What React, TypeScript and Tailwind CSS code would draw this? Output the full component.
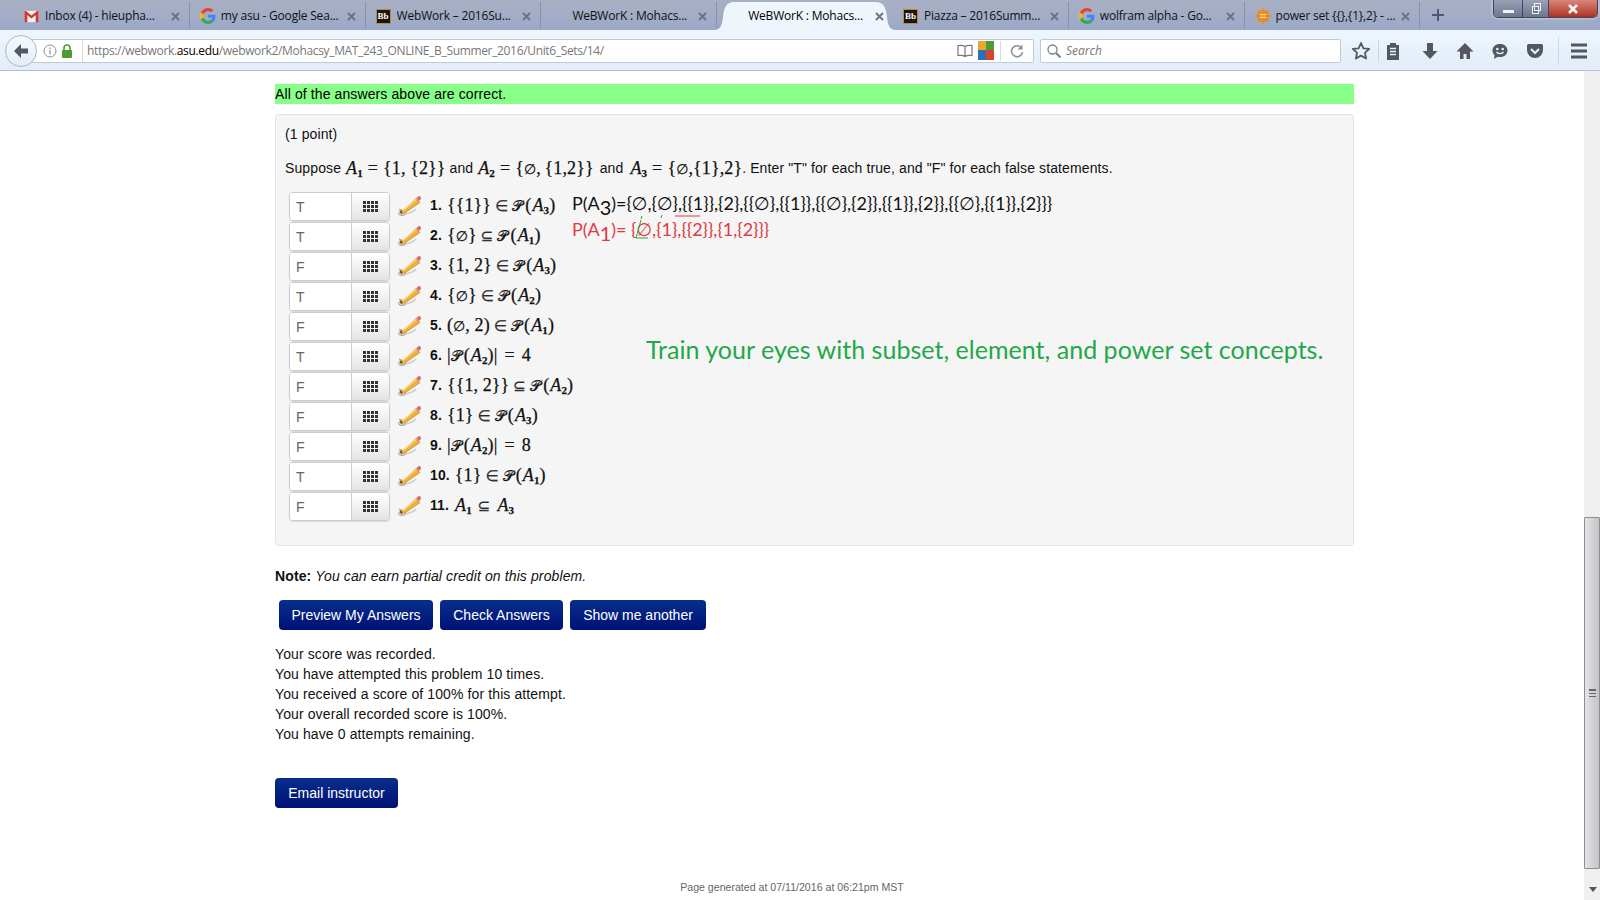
import React from 'react';

const GoogleG = () => (
  <svg width="16" height="16" viewBox="0 0 48 48">
    <path fill="#EA4335" d="M24 9.5c3.5 0 6.700 1.200 9.200 3.600l6.900-6.900C35.900 2.400 30.500 0 24 0 14.600 0 6.500 5.400 2.600 13.200l8 6.200C12.500 13.600 17.800 9.500 24 9.500z" />
    <path fill="#4285F4" d="M46.500 24.500c0-1.600-.1-3.100-.4-4.500H24v9h12.700c-.6 3-2.200 5.500-4.700 7.200l7.700 6c4.500-4.200 6.800-10.300 6.800-17.700z" />
    <path fill="#FBBC05" d="M10.600 28.600c-.5-1.500-.8-3-.8-4.600s.3-3.100.8-4.600l-8-6.200C.9 16.500 0 20.100 0 24s.9 7.500 2.600 10.800l8-6.200z" />
    <path fill="#34A853" d="M24 48c6.500 0 11.900-2.100 15.900-5.800l-7.700-6c-2.200 1.500-4.900 2.300-8.200 2.300-6.200 0-11.500-4.100-13.400-9.900l-8 6.200C6.500 42.600 14.600 48 24 48z" />
  </svg>
);

const Gmail = () => (
  <svg width="15" height="15" viewBox="0 0 16 16">
    <rect x="0.500" y="2" width="15" height="12" fill="#f4f0ee" />
    <path d="M0.500 2v12h3V6.500L8 10l4.500-3.500V14h3V2h-1.500L8 6.800 2 2z" fill="#d0392e" />
  </svg>
);

const Blackboard = () => (
  <span className="flex h-[15px] w-[15px] items-center justify-center border border-[#b98a3a] bg-[#1c1610] font-['Liberation_Serif',serif] text-[9px] leading-none font-bold text-white">
    Bb
  </span>
);

const OrangeGear = () => (
  <svg width="16" height="16" viewBox="0 0 16 16">
    <g fill="#ee8a1d">
      <circle cx="8" cy="8" r="5.500" />
      <rect x="6.800" y="0.500" width="2.400" height="15" />
      <rect x="0.500" y="6.800" width="15" height="2.400" />
      <rect x="6.800" y="0.500" width="2.400" height="15" transform="rotate(45 8 8)" />
      <rect x="6.800" y="0.500" width="2.400" height="15" transform="rotate(-45 8 8)" />
    </g>
    <rect x="5" y="6" width="6" height="1.200" fill="#fde3b8" />
    <rect x="5" y="8.800" width="6" height="1.200" fill="#fde3b8" />
  </svg>
);

const CloseX = () => (
  <svg width="9" height="9" viewBox="0 0 9 9" className="relative shrink-0">
    <path d="M1 1l7 7M8 1L1 8" stroke="#6b7280" strokeWidth="1.800" />
  </svg>
);

const tabs: { title: string; icon: React.ReactNode; active?: boolean }[] = [
  { title: 'Inbox (4) - hieupha...', icon: <Gmail /> },
  { title: 'my asu - Google Sea...', icon: <GoogleG /> },
  { title: 'WebWork – 2016Su...', icon: <Blackboard /> },
  { title: 'WeBWorK : Mohacs...', icon: null },
  { title: 'WeBWorK : Mohacs...', icon: null, active: true },
  { title: 'Piazza – 2016Summ...', icon: <Blackboard /> },
  { title: 'wolfram alpha - Go...', icon: <GoogleG /> },
  { title: 'power set {{},{1},2} - ...', icon: <OrangeGear /> },
];

const TabStrip = () => (
  <div className="flex h-[30px] bg-gradient-to-b from-[#a9b0c4] to-[#9ba9c7] pl-[14px]">
    {tabs.map((t, i) => (
      <div
        key={i}
        className={
          t.active
            ? 'relative mt-[2px] flex h-[28px] w-[175.800px] items-center pr-[9px] pl-[10px] text-black'
            : 'my-[2px] flex h-[26px] w-[175.800px] items-center border-r border-[#8792ab] pt-[2px] pr-[9px] pl-[10px] text-[#111]'
        }
      >
        {t.active && (
          <svg width="182" height="28" viewBox="0 0 182 28" className="absolute top-0 left-[-3px]">
            <path d="M0 28C6 28 8 24 9 15C10 5 13 0 20 0H162C169 0 172 5 173 15C174 24 176 28 182 28Z" fill="#eef5fc" />
          </svg>
        )}
        <span className="flex w-[21px] shrink-0 items-center">{t.icon}</span>
        <span className="relative min-w-0 flex-1 truncate font-['Open_Sans',sans-serif] text-[12px] tracking-[-0.2px]">{t.title}</span>
        <CloseX />
      </div>
    ))}
    <svg width="14" height="14" viewBox="0 0 14 14" className="mt-[8px] ml-[11px]">
      <path d="M7 1v12M1 7h12" stroke="#4d5a73" strokeWidth="2" />
    </svg>
    <div className="ml-[48px] flex h-[18px] w-[105px] overflow-hidden rounded-b-[5px] border border-t-0 border-[#3f4557] shadow-[0_0_3px_#e8ecf4]">
      <div className="flex w-[28px] items-end justify-center bg-gradient-to-b from-[#9aa2b8] to-[#6d7690] pb-[4px]">
        <span className="h-[3px] w-[11px] bg-[#f2f2f2]" />
      </div>
      <div className="flex w-[27px] items-center justify-center border-x border-[#3f4557] bg-gradient-to-b from-[#9aa2b8] to-[#6d7690]">
        <span className="relative mt-[2px] h-[8px] w-[7px] border border-[#f2f2f2] bg-[#6d7690]">
          <span className="absolute top-[-4px] left-[1px] h-[8px] w-[7px] border border-[#f2f2f2]" />
        </span>
      </div>
      <div className="flex flex-1 items-center justify-center bg-gradient-to-b from-[#d8867a] to-[#ad3020]">
        <svg width="12" height="10" viewBox="0 0 12 10">
          <path d="M2 1l8 8M10 1l-8 8" stroke="#f5f5f5" strokeWidth="2.600" />
        </svg>
      </div>
    </div>
  </div>
);

const gray = '#53575f';

const Toolbar = () => (
  <div className="flex h-[41px] items-center border-b border-[#b3c0cf] bg-gradient-to-b from-[#eef5fc] to-[#e2edf8] pt-px pl-[5px]">
    <div className="z-10 flex h-[32px] w-[32px] shrink-0 items-center justify-center rounded-full border border-[#a9b8c9] bg-gradient-to-b from-[#f7fbff] to-[#e3ecf6]">
      <svg width="18" height="18" viewBox="0 0 18 18">
        <path d="M9 2L2 9l7 7v-4.500h7v-5H9z" fill={gray} />
      </svg>
    </div>
    <div className="-ml-[6px] flex h-[24px] w-[1003px] items-center rounded-r-[2px] border border-[#bccada] bg-white">
      <svg width="14" height="14" viewBox="0 0 14 14" className="ml-[11px]">
        <circle cx="7" cy="7" r="6" fill="none" stroke="#8b8f96" />
        <path d="M7 6v4.500M7 3.500v1.500" stroke="#8b8f96" strokeWidth="1.200" />
      </svg>
      <svg width="12" height="14" viewBox="0 0 12 14" className="ml-[4px]">
        <rect x="1" y="6" width="10" height="8" rx="1" fill="#4f9a35" />
        <path d="M3 6.500V4a3 3 0 0 1 6 0v2.500" fill="none" stroke="#4f9a35" strokeWidth="1.600" />
      </svg>
      <span className="ml-[9px] h-[22px] w-px bg-[#d5dbe3]" />
      <span className="ml-[4px] flex-1 truncate font-['Open_Sans',sans-serif] text-[12px] tracking-[-0.34px] text-[#777]">
        https://webwork.<span className="text-black">asu.edu</span>/webwork2/Mohacsy_MAT_243_ONLINE_B_Summer_2016/Unit6_Sets/14/
      </span>
      <svg width="16" height="14" viewBox="0 0 16 14" className="mr-[5px]">
        <path d="M8 2.500C6.500 1.500 4 1 1 1.500v10c3-.5 5.500 0 7 1 1.500-1 4-1.500 7-1v-10c-3-.5-5.500 0-7 1zM8 2.500v10" fill="none" stroke="#777" strokeWidth="1.200" />
      </svg>
      <svg width="16" height="19" viewBox="0 0 16 19" className="mr-[6px]">
        <rect width="8" height="9" fill="#e8a92c" />
        <rect x="8" width="8" height="9" fill="#4f9a35" />
        <rect y="9" width="8" height="10" fill="#2f6fb5" />
        <rect x="8" y="9" width="8" height="10" fill="#d8432f" />
      </svg>
      <span className="h-[20px] w-px bg-[#d5dbe3]" />
      <svg width="14" height="14" viewBox="0 0 14 14" className="mr-[9px] ml-[9px]">
        <path d="M11.500 4A5.500 5.500 0 1 0 12.500 8" fill="none" stroke="#8b8f96" strokeWidth="1.600" />
        <path d="M12.500 0.500v5h-5z" fill="#8b8f96" />
      </svg>
    </div>
    <div className="ml-[6px] flex h-[24px] w-[301px] items-center rounded-[2px] border border-[#bccada] bg-white">
      <svg width="14" height="14" viewBox="0 0 14 14" className="ml-[6px]">
        <circle cx="5.500" cy="5.500" r="4.500" fill="none" stroke="#7c8088" strokeWidth="1.300" />
        <path d="M9 9l4.500 4.500" stroke="#7c8088" strokeWidth="2" />
      </svg>
      <span className="ml-[5px] font-['Open_Sans',sans-serif] text-[12px] text-[#777] italic">Search</span>
    </div>
    <svg width="20" height="20" viewBox="0 0 20 20" className="ml-[10px]">
      <path d="M10 2l2.400 5.300 5.800.6-4.300 3.900 1.200 5.700-5.100-2.900-5.100 2.900 1.200-5.700L1.800 7.900l5.800-.6z" fill="none" stroke={gray} strokeWidth="1.800" strokeLinejoin="round" />
    </svg>
    <span className="ml-[7px] h-[22px] w-px bg-[#cdd7e3]" />
    <svg width="20" height="20" viewBox="0 0 20 20" className="ml-[4px]">
      <path d="M4 4h3V2h6v2h3v15H4z" fill={gray} />
      <path d="M7 7.500h6M7 10.500h6M7 13.500h6" stroke="#e8f0f9" strokeWidth="1.300" />
    </svg>
    <svg width="20" height="20" viewBox="0 0 20 20" className="ml-[17px]">
      <path d="M7 2h6v8h4.500L10 18 2.500 10H7z" fill={gray} />
    </svg>
    <svg width="20" height="20" viewBox="0 0 20 20" className="ml-[15px]">
      <path d="M10 2L1.500 10.500H5V18h3.500v-5h3v5H15v-7.500h3.500z" fill={gray} />
    </svg>
    <svg width="20" height="20" viewBox="0 0 20 20" className="ml-[15px]">
      <path d="M10 3c4.400 0 7.500 2.700 7.500 6.500S14.400 16 10 16c-.8 0-1.500-.1-2.200-.2L4 18l.6-3.700C3.200 13 2.500 11.400 2.500 9.500 2.500 5.700 5.600 3 10 3z" fill={gray} />
      <circle cx="7.300" cy="8" r="1.300" fill="#e8f0f9" />
      <circle cx="12.700" cy="8" r="1.300" fill="#e8f0f9" />
      <path d="M6.500 11c1.800 2.200 5.200 2.200 7 0" fill="none" stroke="#e8f0f9" strokeWidth="1.300" />
    </svg>
    <svg width="20" height="20" viewBox="0 0 20 20" className="ml-[15px]">
      <path d="M3.500 3h13A1.500 1.500 0 0 1 18 4.500V9a8 8 0 0 1-16 0V4.500A1.500 1.500 0 0 1 3.500 3z" fill={gray} />
      <path d="M6 8l4 4 4-4" fill="none" stroke="#e8f0f9" strokeWidth="2.200" />
    </svg>
    <span className="ml-[13px] h-[28px] w-px bg-[#cdd7e3]" />
    <svg width="20" height="20" viewBox="0 0 20 20" className="ml-[10px]">
      <path d="M2 2.500h16v3H2zM2 8.500h16v3H2zM2 14.500h16v3H2z" fill={gray} />
    </svg>
  </div>
);

// math helpers, set in a serif face like the page's rendered TeX
const A = ({ n }: { n: number }) => (
  <>
    <i className="ml-px">A</i>
    <sub className="text-[11px] font-bold">{n}</sub>
  </>
);
const PS = ({ n }: { n: number }) => (
  <>
    <span className="mr-[2px] font-['DejaVu_Serif',serif] text-[15px]">𝒫</span>(<A n={n} />)
  </>
);
const Rel = ({ c }: { c: string }) => <span className="mx-[4px] text-[15px] text-[#333]">{c}</span>;
const RelWide = ({ c }: { c: string }) => <span className="mx-[6px] text-[15px] text-[#333]">{c}</span>;
const Eq = () => <span className="mx-[5px] text-[#222]">=</span>;
const EqWide = () => <span className="mx-[7px] text-[#222]">=</span>;
const Empty = () => <span className="text-[14px]">∅</span>;

const Math_ = ({ children }: { children: React.ReactNode }) => (
  <span className="font-['Liberation_Serif','DejaVu_Sans',serif] text-[18px] leading-none whitespace-nowrap text-[#111] [-webkit-text-stroke:0.25px_#111]">{children}</span>
);

const questions: { answer: string; math: React.ReactNode }[] = [
  { answer: 'T', math: <>{'{{1}}'}<Rel c="∈" /><PS n={3} /></> },
  { answer: 'T', math: <>{'{'}<Empty />{'}'}<Rel c="⊆" /><PS n={1} /></> },
  { answer: 'F', math: <>{'{1, 2}'}<Rel c="∈" /><PS n={3} /></> },
  { answer: 'T', math: <>{'{'}<Empty />{'}'}<Rel c="∈" /><PS n={2} /></> },
  { answer: 'F', math: <>(<Empty />, 2)<Rel c="∈" /><PS n={1} /></> },
  { answer: 'T', math: <>|<PS n={2} />|<EqWide />4</> },
  { answer: 'F', math: <>{'{{1, 2}}'}<Rel c="⊆" /><PS n={2} /></> },
  { answer: 'F', math: <>{'{1}'}<Rel c="∈" /><PS n={3} /></> },
  { answer: 'F', math: <>|<PS n={2} />|<EqWide />8</> },
  { answer: 'T', math: <>{'{1}'}<Rel c="∈" /><PS n={1} /></> },
  { answer: 'F', math: <><A n={1} /><RelWide c="⊆" /><A n={3} /></> },
];

const GridIcon = () => (
  <svg width="15" height="11" viewBox="0 0 15 11">
    <path d="M0 0h3v3H0zM4 0h3v3H4zM8 0h3v3H8zM12 0h3v3h-3zM0 4h3v3H0zM4 4h3v3H4zM8 4h3v3H8zM12 4h3v3h-3zM0 8h3v3H0zM4 8h3v3H4zM8 8h3v3H8zM12 8h3v3h-3z" fill="#333" />
  </svg>
);

const Pencil = () => (
  <svg width="25" height="21" viewBox="0 0 25 21" className="shrink-0">
    <ellipse cx="4" cy="18.500" rx="3.500" ry="1.800" fill="none" stroke="#8a8a8a" strokeWidth="1" />
    <path d="M7 19c4-.5 8-2 11-5" fill="none" stroke="#c9c9c9" strokeWidth="1.500" />
    <path d="M3 19L1.500 14 5 15.500 18 3.500l4 4L7 18z" fill="#f0b03c" stroke="#b97f1e" strokeWidth="0.600" />
    <path d="M5 15.500l14-12" stroke="#fbdc8a" strokeWidth="1.300" />
    <path d="M3 19l-1-3.500 2.500 1.500z" fill="#333" />
    <path d="M18 3.500l2-2c.8-.6 1.800-.5 2.500.2s.8 1.900.1 2.700l-2 1.800z" fill="#d9707a" />
  </svg>
);

const QuestionRow = ({ index, answer, math }: { index: number; answer: string; math: React.ReactNode }) => (
  <div className="flex h-[30px] items-start">
    <div className="flex h-[29px] w-[101px] shrink-0 rounded-[4px] border border-[#ccc] shadow-[0_1px_1px_rgba(0,0,0,0.12)]">
      <span className="flex w-[61px] items-center rounded-l-[3px] bg-white pl-[6px] text-[14px] text-[#666]">{answer}</span>
      <span className="flex flex-1 items-center justify-center rounded-r-[3px] border-l border-[#ccc] bg-gradient-to-b from-white to-[#e4e4e4]">
        <GridIcon />
      </span>
    </div>
    <span className="mt-[3px] ml-[8px] flex shrink-0 items-center">
      <Pencil />
    </span>
    <span className="mt-[3px] ml-[7px] flex h-[20px] shrink-0 items-center">
      <b className="mr-[5px] text-[14px] text-[#111]">{index}.</b>
      <Math_>{math}</Math_>
    </span>
  </div>
);

const Button = ({ className, children }: { className: string; children: React.ReactNode }) => (
  <span className={'flex h-[30px] items-center justify-center rounded-[4px] bg-gradient-to-b from-[#0a2d8c] to-[#001075] text-[14px] text-white ' + className}>{children}</span>
);

const Scrollbar = () => (
  <div className="flex w-[16px] shrink-0 flex-col bg-[#f0f0f0] pt-[446px]">
    <div className="flex h-[352px] items-center justify-center rounded-[1px] border border-[#8f8f8f] bg-gradient-to-r from-[#e4e4e6] to-[#c4c4c8]">
      <span className="h-[8px] w-[7px] border-y border-[#666] bg-[linear-gradient(#666_1px,transparent_1px,transparent_3px)] bg-[length:7px_3px]" />
    </div>
    <svg width="8" height="5" viewBox="0 0 8 5" className="mt-[18px] ml-[5px]">
      <path d="M0 0h8L4 5z" fill="#555" />
    </svg>
  </div>
);

export default function App() {
  return (
    <div className="flex h-screen w-screen flex-col overflow-hidden bg-white font-['Liberation_Sans',Arial,sans-serif] text-[14px] leading-[20px] text-[#111]">
      <TabStrip />
      <Toolbar />
      <div className="flex min-h-0 flex-1">
        <div className="flex min-w-0 flex-1 flex-col pt-[13px]">
          <div className="ml-[275px] w-[1079px] tracking-[0.11px]">
            <div className="h-[20px] bg-[#88ff88] text-black">All of the answers above are correct.</div>
            <div className="mt-[10px] h-[432px] rounded-[4px] border border-[#e3e3e3] bg-[#f5f5f5] px-[9px] pt-[9px]">
              <p>(1 point)</p>
              <p className="mt-[14px] flex h-[20px] items-center whitespace-pre">
                Suppose{' '}
                <Math_><A n={1} /><Eq />{'{1, {2}}'}</Math_>
                {' and '}
                <Math_><A n={2} /><Eq />{'{'}<Empty />{',\u2009{1,2}}'}</Math_>
                <span className="mx-[2px]">{' and '}</span>
                <Math_><A n={3} /><Eq />{'{'}<Empty />{',{1},2}'}</Math_>
                {'. Enter "T" for each true, and "F" for each false statements.'}
              </p>
              <div className="mt-[14px] ml-[4px] flex">
                <div className="w-[283px] shrink-0">
                  {questions.map((q, i) => (
                    <QuestionRow key={i} index={i + 1} answer={q.answer} math={q.math} />
                  ))}
                </div>
                <div className="relative flex-1 font-['Lato','DejaVu_Sans',sans-serif] tracking-[-0.03px]">
                  <p className="-mt-[1px] text-[18px] leading-[24px] whitespace-nowrap text-[#111]">
                    P(A<sub className="text-[20px]">3</sub>)={'{∅,{∅},{{1}},{2},{{∅},{{1}},{{∅},{2}},{{1}},{2}},{{∅},{{1}},{2}}}'}
                  </p>
                  <p className="mt-[2px] text-[18px] leading-[24px] whitespace-nowrap text-[#e03b3f]">
                    P(A<sub className="text-[20px]">1</sub>)= {'{∅,{1},{{2}},{1,{2}}}'}
                  </p>
                  <p className="mt-[92px] ml-[74px] text-[25px] leading-[32px] tracking-[0.03px] whitespace-nowrap text-[#22a84a]">
                    Train your eyes with subset, element, and power set concepts.
                  </p>
                  {/* hand-drawn marks over the annotations */}
                  <svg width="140" height="50" viewBox="0 0 140 50" className="absolute top-0 left-0">
                    <path d="M103 24h25" stroke="#e03b3f" strokeWidth="1" />
                    <path d="M64 46h12M64 46l5-18M69 27l1-3M89 26l1-3" stroke="#22a84a" strokeWidth="1" fill="none" />
                  </svg>
                </div>
              </div>
            </div>
            <p className="mt-[20px]">
              <b>Note:</b> <i>You can earn partial credit on this problem.</i>
            </p>
            <div className="mt-[14px] ml-[4px] flex gap-[7px] tracking-normal">
              <Button className="w-[154px]">Preview My Answers</Button>
              <Button className="w-[123px]">Check Answers</Button>
              <Button className="w-[136px]">Show me another</Button>
            </div>
            <div className="mt-[14px]">
              <p>Your score was recorded.</p>
              <p>You have attempted this problem 10 times.</p>
              <p>You received a score of 100% for this attempt.</p>
              <p>Your overall recorded score is 100%.</p>
              <p>You have 0 attempts remaining.</p>
            </div>
            <div className="mt-[34px] flex tracking-normal">
              <Button className="w-[123px]">Email instructor</Button>
            </div>
          </div>
          <p className="mt-[69px] text-center text-[10.600px] text-[#666]">Page generated at 07/11/2016 at 06:21pm MST</p>
        </div>
        <Scrollbar />
      </div>
    </div>
  );
}
